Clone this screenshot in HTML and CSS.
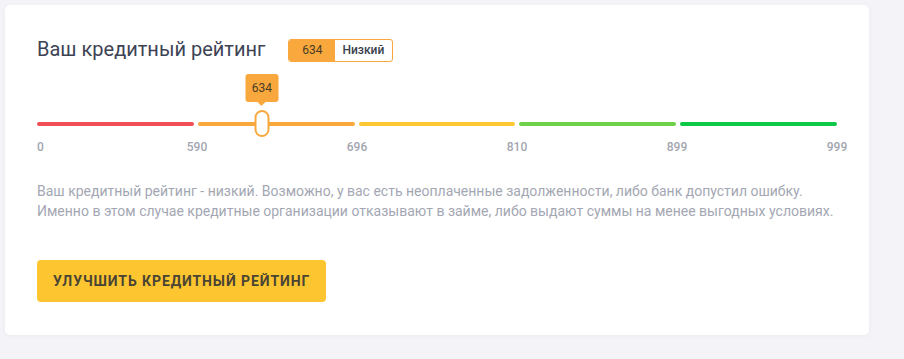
FILE: index.html
```html
<!DOCTYPE html>
<html lang="ru">
<head>
    <meta charset="UTF-8">
    <meta name="viewport" content="width=device-width, initial-scale=1.0">
    <title>Кредитный рейтинг</title>
    <link rel="stylesheet" href="styles.css">
</head>
<body>
    <div class="rating-card">
        <div class="rating-head">
            <h1>Ваш кредитный рейтинг</h1>
            <div class="rating-badge">
                <span class="badge-score">634</span>
                <span class="badge-level">Низкий</span>
            </div>
        </div>

        <div class="scale">
            <div class="scale-bar">
                <span class="seg seg-red"></span>
                <span class="seg seg-orange"></span>
                <span class="seg seg-yellow"></span>
                <span class="seg seg-lime"></span>
                <span class="seg seg-green"></span>
            </div>
            <div class="scale-marker" style="left: 28.1%">
                <div class="marker-tip">634</div>
                <div class="marker-thumb"></div>
            </div>
            <div class="scale-labels">
                <span class="tick tick-first">0</span>
                <span class="tick" style="left: 20%">590</span>
                <span class="tick" style="left: 40%">696</span>
                <span class="tick" style="left: 60%">810</span>
                <span class="tick" style="left: 80%">899</span>
                <span class="tick" style="left: 100%">999</span>
            </div>
        </div>

        <p class="rating-text">
            Ваш кредитный рейтинг - низкий. Возможно, у вас есть неоплаченные задолженности, либо банк допустил ошибку.<br>
            Именно в этом случае кредитные организации отказывают в займе, либо выдают суммы на менее выгодных условиях.
        </p>

        <button class="improve-button">Улучшить кредитный рейтинг</button>
    </div>
</body>
</html>
```

FILE: styles.css
```css
* {
    box-sizing: border-box;
    font-family: Roboto, 'Liberation Sans', sans-serif;
}

body {
    margin: 0;
    padding: 5px;
    background-color: #f4f4f8;
}

.rating-card {
    width: 864px;
    background-color: #fff;
    border-radius: 5px;
    box-shadow: 0 1px 4px rgba(40, 40, 80, 0.05);
    padding: 31px 32px 33px;
}

.rating-head {
    display: flex;
    align-items: center;
}

h1 {
    margin: 0;
    font-size: 20px;
    font-weight: 400;
    line-height: 24px;
    color: #3d4354;
}

.rating-badge {
    display: flex;
    margin-left: 23px;
    margin-top: 3px;
    height: 23px;
    border: 1px solid #f8a83c;
    border-radius: 3px;
    overflow: hidden;
    font-size: 12px;
    line-height: 21px;
}

.badge-score {
    width: 46px;
    text-align: center;
    background-color: #f8a83c;
    color: #4a3c26;
}

.badge-level {
    padding: 0 8px 0 7px;
    color: #3a3f4d;
    font-weight: 500;
}

.scale {
    position: relative;
    width: 800px;
    margin-top: 60px;
    height: 34px;
}

.scale-bar {
    display: grid;
    grid-template-columns: repeat(5, 1fr);
    gap: 4px;
}

.seg {
    height: 4px;
    border-radius: 2px;
}

.seg-red { background-color: #ef5055; }
.seg-orange { background-color: #f8a83c; }
.seg-yellow { background-color: #fdc734; }
.seg-lime { background-color: #6dd24a; }
.seg-green { background-color: #0ec948; }

.scale-marker {
    position: absolute;
    top: -48px;
    display: flex;
    flex-direction: column;
    align-items: center;
    transform: translateX(-50%);
}

.marker-tip {
    position: relative;
    width: 33px;
    height: 28px;
    background-color: #f8a83c;
    border-radius: 3px;
    text-align: center;
    font-size: 12px;
    line-height: 28px;
    color: #4a3c26;
}

.marker-tip::after {
    content: "";
    position: absolute;
    left: 50%;
    bottom: -4px;
    margin-left: -4px;
    border-left: 4px solid transparent;
    border-right: 4px solid transparent;
    border-top: 4px solid #f8a83c;
}

.marker-thumb {
    margin-top: 8px;
    width: 15px;
    height: 27px;
    border: 2px solid #f8a83c;
    border-radius: 8px;
    background-color: #fff;
}

.scale-labels {
    position: relative;
    margin-top: 14px;
    height: 14px;
    font-size: 12px;
    font-weight: 500;
    color: #a3a6b1;
}

.tick {
    position: absolute;
    top: 0;
    transform: translateX(-50%);
}

.tick-first {
    left: 0;
    transform: none;
}

.rating-text {
    margin: 25px 0 0;
    font-size: 14px;
    line-height: 20px;
    color: #a4a7b3;
}

.improve-button {
    margin-top: 39px;
    height: 42px;
    padding: 0 16px;
    border: none;
    border-radius: 4px;
    background-color: #fdc630;
    color: #4a4434;
    font-size: 14px;
    font-weight: 700;
    letter-spacing: 0.9px;
    text-transform: uppercase;
    cursor: pointer;
}
```
